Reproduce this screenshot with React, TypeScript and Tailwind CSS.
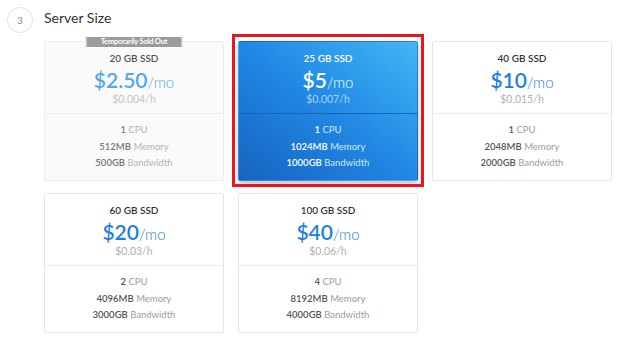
import React from 'react';

type Plan = {
  ssd: string;
  price: string;
  hourly: string;
  cpu: string;
  memory: string;
  bandwidth: string;
  soldOut?: boolean;
  selected?: boolean;
};

const plans: Plan[] = [
  { ssd: '20 GB SSD', price: '$2.50', hourly: '$0.004/h', cpu: '1', memory: '512MB', bandwidth: '500GB', soldOut: true },
  { ssd: '25 GB SSD', price: '$5', hourly: '$0.007/h', cpu: '1', memory: '1024MB', bandwidth: '1000GB', selected: true },
  { ssd: '40 GB SSD', price: '$10', hourly: '$0.015/h', cpu: '1', memory: '2048MB', bandwidth: '2000GB' },
  { ssd: '60 GB SSD', price: '$20', hourly: '$0.03/h', cpu: '2', memory: '4096MB', bandwidth: '3000GB' },
  { ssd: '100 GB SSD', price: '$40', hourly: '$0.06/h', cpu: '4', memory: '8192MB', bandwidth: '4000GB' },
];

function PlanCard({ plan }: { plan: Plan }) {
  const { selected, soldOut } = plan;

  const cardCls = selected
    ? 'bg-linear-to-bl from-[#42b6f4] via-[#2187e4] to-[#1764c0] border-transparent shadow-[0_3px_6px_rgba(0,0,0,0.25)]'
    : soldOut
      ? 'bg-[#fafafa] border-[#ececec]'
      : 'bg-white border-[#e6e6e6]';

  const titleCls = selected ? 'text-white' : soldOut ? 'text-[#555]' : 'text-[#333]';
  const priceCls = selected ? 'text-white' : soldOut ? 'text-[#55a8f0]' : 'text-[#1f80e3]';
  const hourlyCls = selected ? 'text-[#a6d4f7]' : soldOut ? 'text-[#c4c4c4]' : 'text-[#b0b0b0]';
  const valueCls = selected ? 'text-white' : soldOut ? 'text-[#777]' : 'text-[#555]';
  const labelCls = selected ? 'text-[#d3e9fb]' : soldOut ? 'text-[#b4b4b4]' : 'text-[#9c9c9c]';
  const dividerCls = selected ? 'border-[#1a63b8]' : 'border-[#ececec]';

  return (
    <div className={`relative w-[180px] h-[140px] rounded-[2px] border flex flex-col ${cardCls}`}>
      {/* selection frame */}
      {selected && <div className="absolute -left-[7px] -right-[7px] -top-[8px] -bottom-[7px] border-[3px] border-[#e8161e] pointer-events-none" />}
      {soldOut && (
        <div className="absolute left-1/2 -translate-x-1/2 -top-[6px] w-[97px] h-[12px] bg-[#9b9b9b] border border-white flex items-center justify-center text-[7.5px] font-bold text-white leading-none tracking-[-0.2px]">
          Temporarily Sold Out
        </div>
      )}
      <div className="h-[71px] flex flex-col items-center pt-[9px]">
        <div className={`text-[10px] font-semibold leading-[14px] ${titleCls}`}>{plan.ssd}</div>
        <div className={`mt-[4px] leading-[22px] ${priceCls}`}>
          <span className="text-[21px] font-semibold">{plan.price}</span>
          <span className="text-[15px] font-light">/mo</span>
        </div>
        <div className={`text-[10.5px] leading-[12px] ${hourlyCls}`}>{plan.hourly}</div>
      </div>
      <div className={`border-t ${dividerCls} flex flex-col items-center pt-[8px] text-[9.5px] leading-[16.5px]`}>
        <div>
          <span className={`font-semibold ${valueCls}`}>{plan.cpu}</span> <span className={labelCls}>CPU</span>
        </div>
        <div>
          <span className={`font-semibold ${valueCls}`}>{plan.memory}</span> <span className={labelCls}>Memory</span>
        </div>
        <div>
          <span className={`font-semibold ${valueCls}`}>{plan.bandwidth}</span> <span className={labelCls}>Bandwidth</span>
        </div>
      </div>
    </div>
  );
}

export default function App() {
  return (
    <div className="w-[640px] h-[348px] bg-white overflow-hidden font-['Lato','Open_Sans',sans-serif]">
      {/* Step header */}
      <div className="flex items-center pt-[7px] pl-[7px]">
        <div className="w-[26px] h-[26px] rounded-full border border-[#e2e2e2] flex items-center justify-center text-[10px] text-[#888]">
          3
        </div>
        <div className="ml-[11px] text-[14px] text-[#333] leading-none -mt-[5px]">Server Size</div>
      </div>

      {/* Plans */}
      <div className="ml-[44px] mt-[8px] grid grid-cols-[180px_180px_180px] gap-x-[14px] gap-y-[12px]">
        {plans.map((p) => (
          <PlanCard key={p.ssd} plan={p} />
        ))}
      </div>
    </div>
  );
}
